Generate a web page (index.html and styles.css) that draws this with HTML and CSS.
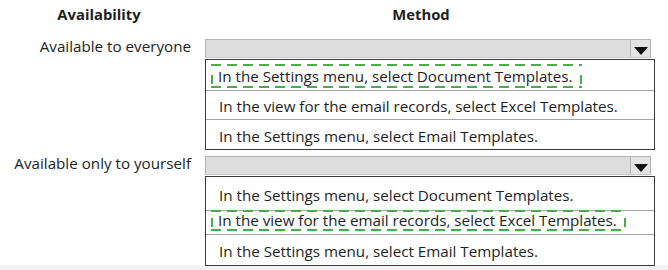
FILE: index.html
```html
<!DOCTYPE html>
<html>
<head>
    <meta charset="utf-8">
    <title>Availability / Method</title>
    <link rel="stylesheet" href="styles.css">
</head>
<body>
<div class="sheet">
    <div class="head">
        <div class="col-label">Availability</div>
        <div class="col-method">Method</div>
    </div>

    <div class="choice choice-a">
        <div class="label">Available to everyone</div>
        <div class="method">
            <div class="combo"><span class="arrow"></span></div>
            <div class="list">
                <div class="item"><span class="pick">In the Settings menu, select Document Templates.</span></div>
                <div class="item"><span class="opt">In the view for the email records, select Excel Templates.</span></div>
                <div class="item"><span class="opt">In the Settings menu, select Email Templates.</span></div>
            </div>
        </div>
    </div>

    <div class="choice choice-b">
        <div class="label">Available only to yourself</div>
        <div class="method">
            <div class="combo"><span class="arrow"></span></div>
            <div class="list">
                <div class="item"><span class="opt">In the Settings menu, select Document Templates.</span></div>
                <div class="item"><span class="pick">In the view for the email records, select Excel Templates.</span></div>
                <div class="item"><span class="opt">In the Settings menu, select Email Templates.</span></div>
            </div>
        </div>
    </div>
</div>
<div class="foot"></div>
</body>
</html>
```

FILE: styles.css
```css
body
{
    margin:0;
    background:#ffffff;
    color:#1e1e1e;
    font-family:"Open Sans", "Noto Sans", sans-serif;
    font-size:15.2px;
}

.sheet
{
    width:668px;
    height:265px;
}

.head
{
    display:grid;
    grid-template-columns:198px 436px;
    height:28px;
    align-items:center;
    font-weight:bold;
    font-size:14.8px;
    text-align:center;
}

.head .col-method
{
    padding-left:10px;
}

.choice
{
    display:grid;
    grid-template-columns:191px 450px;
    column-gap:14px;
}

.choice-a
{
    margin-top:11px;
}

.choice-b
{
    margin-top:6px;
}

.label
{
    text-align:right;
    height:18px;
    line-height:15px;
    white-space:nowrap;
}

.combo
{
    position:relative;
    width:444px;
    height:17px;
    background:#dedede;
    border:1px solid #b4b4b4;
    border-bottom-color:#c8c8c8;
}

.arrow
{
    position:absolute;
    right:0;
    top:0;
    width:19px;
    height:17px;
    border-left:1px solid #b4b4b4;
    background:#e4e4e4;
}

.arrow::after
{
    content:"";
    position:absolute;
    left:3px;
    top:7px;
    border-left:7px solid transparent;
    border-right:7px solid transparent;
    border-top:8px solid #111111;
}

.list
{
    margin-top:1px;
    width:448px;
    border:1px solid #3a3a3a;
    background:#ffffff;
}

.item
{
    display:flex;
    align-items:center;
    padding-left:5px;
    padding-top:2px;
    border-top:1px solid #a6a6a6;
    white-space:nowrap;
    box-sizing:border-box;
}

.item:first-child
{
    border-top:none;
}

.choice-a .item:nth-child(1) { height:30px; }
.choice-a .item:nth-child(2) { height:29px; }
.choice-a .item:nth-child(3) { height:30px; }

.choice-b .item:nth-child(1) { height:33px; }
.choice-b .item:nth-child(2) { height:24px; padding-top:0; }
.choice-b .item:nth-child(3) { height:31px; }

.opt
{
    padding:0 8px;
}

.pick
{
    padding:2px 9px 1px 7px;
    line-height:21px;
    background:
        repeating-linear-gradient(90deg, #4aab4a 0 10px, transparent 10px 16px) top left / 100% 2px no-repeat,
        repeating-linear-gradient(90deg, #4aab4a 0 10px, transparent 10px 16px) bottom left / 100% 2px no-repeat,
        linear-gradient(#4aab4a, #4aab4a) left 70% / 2px 9px no-repeat,
        linear-gradient(#4aab4a, #4aab4a) right 70% / 2px 9px no-repeat;
}

.choice-b .pick
{
    line-height:19px;
    padding-top:1px;
    margin-top:-4px;
}

.foot
{
    height:5px;
    background:#f2f2f2;
}
```
